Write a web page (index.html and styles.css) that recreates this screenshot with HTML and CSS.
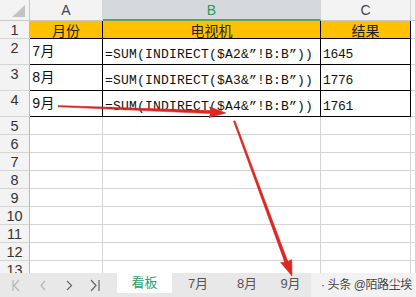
FILE: index.html
```html
<!DOCTYPE html>
<html>
<head>
<meta charset="utf-8">
<title>看板</title>
<link rel="stylesheet" href="styles.css">
</head>
<body>
<div class="page">
    <div class="grid">
        <div class="corner"><span class="tri"></span></div>
        <div class="colh">A</div>
        <div class="colh sel">B</div>
        <div class="colh">C</div>
        <div class="colh"></div>

        <div class="rowh">1</div>
        <div class="c t head">月份</div>
        <div class="c t head">电视机</div>
        <div class="c t head">结果</div>
        <div class="c"></div>

        <div class="rowh">2</div>
        <div class="c t txt">7月</div>
        <div class="c t fx">=SUM(INDIRECT($A2&amp;”!B:B”))</div>
        <div class="c t num">1645</div>
        <div class="c"></div>

        <div class="rowh">3</div>
        <div class="c t txt">8月</div>
        <div class="c t fx">=SUM(INDIRECT($A3&amp;”!B:B”))</div>
        <div class="c t num">1776</div>
        <div class="c"></div>

        <div class="rowh">4</div>
        <div class="c t txt">9月</div>
        <div class="c t fx">=SUM(INDIRECT($A4&amp;”!B:B”))</div>
        <div class="c t num">1761</div>
        <div class="c"></div>

        <div class="rowh">5</div><div class="c"></div><div class="c"></div><div class="c"></div><div class="c"></div>
        <div class="rowh">6</div><div class="c"></div><div class="c"></div><div class="c"></div><div class="c"></div>
        <div class="rowh">7</div><div class="c"></div><div class="c"></div><div class="c"></div><div class="c"></div>
        <div class="rowh">8</div><div class="c"></div><div class="c"></div><div class="c"></div><div class="c"></div>
        <div class="rowh">9</div><div class="c"></div><div class="c"></div><div class="c"></div><div class="c"></div>
        <div class="rowh">10</div><div class="c"></div><div class="c"></div><div class="c"></div><div class="c"></div>
        <div class="rowh">11</div><div class="c"></div><div class="c"></div><div class="c"></div><div class="c"></div>
        <div class="rowh">12</div><div class="c"></div><div class="c"></div><div class="c"></div><div class="c"></div>
        <div class="rowh">13</div><div class="c"></div><div class="c"></div><div class="c"></div><div class="c"></div>
    </div>

    <div class="tabs">
        <svg class="nav" width="117" height="24" viewBox="0 0 117 24">
            <g fill="none" stroke-width="1.2">
                <path d="M13 7V18M19 7L14 12.5L19 18" stroke="#b5b5b5"/>
                <path d="M45 8L41 12.5L45 17" stroke="#b5b5b5"/>
                <path d="M67 8L71.5 12.5L67 17" stroke="#666"/>
                <path d="M91 7L96 12.5L91 18M99 7V18" stroke="#666"/>
            </g>
        </svg>
        <div class="tab on">看板</div>
        <div class="tab w7">7月</div>
        <div class="tab w8">8月</div>
        <div class="tab w9">9月</div>
        <div class="mark">· 头条 @陌路尘埃</div>
    </div>

    <svg class="arrows" width="416" height="297" viewBox="0 0 416 297">
        <g fill="#e0271f" stroke="#c8221b" stroke-width="0.5">
            <polygon points="58,105.6 211,110.6 211,113.6 58,106.8"/>
            <polygon points="226,113 209.5,106.8 211,112 209,117.6"/>
            <polygon points="233.5,121.2 235,120.7 288,262 285,263"/>
            <polygon points="292,276 280.6,262.6 286.5,262.2 291.8,259.6"/>
        </g>
    </svg>
</div>
</body>
</html>
```

FILE: styles.css
```css
body {
    margin: 0;
    background: #fff;
    font-family: "Liberation Sans", "Noto Sans CJK SC", sans-serif;
}
.page {
    position: relative;
    width: 416px;
    height: 297px;
    overflow: hidden;
}
.grid {
    display: grid;
    grid-template-columns: 30px 73px 218px 90px 5px;
    grid-template-rows: 21px 18px 26px 26px 26px repeat(9, 18px);
    height: 273px;
    overflow: hidden;
}
.grid > div {
    box-sizing: border-box;
}
.corner {
    position: relative;
    background: #f3f3f3;
    border-right: 1px solid #c9c9c9;
    border-bottom: 1px solid #c9c9c9;
}
.tri {
    position: absolute;
    right: 4px;
    bottom: 3px;
    width: 0;
    height: 0;
    border-left: 13px solid transparent;
    border-bottom: 12px solid #c3c3c3;
}
.colh {
    background: #f3f3f3;
    border-right: 1px solid #d4d4d4;
    border-bottom: 1px solid #c9c9c9;
    color: #444;
    font-size: 14px;
    text-align: center;
    line-height: 21px;
}
.colh.sel {
    background: #d6d9dc;
    color: #2c9a5e;
    border-bottom: 2px solid #5aa552;
}
.rowh {
    background: #f3f3f3;
    border-right: 1px solid #b8b8b8;
    border-bottom: 1px solid #d4d4d4;
    color: #333;
    font-size: 14.5px;
    text-align: center;
    line-height: 18px;
}
.c {
    border-right: 1px solid #d4d4d4;
    border-bottom: 1px solid #d4d4d4;
    display: flex;
    align-items: flex-end;
    padding: 0 0 2px 2px;
    white-space: nowrap;
    color: #111;
}
.c.t {
    border-right-color: #000;
    border-bottom-color: #000;
}
.head {
    background: #ffc000;
    justify-content: center;
    align-items: center;
    padding: 0;
    font-family: "Noto Sans CJK SC", sans-serif;
    font-size: 14px;
    color: #222;
}
.txt {
    font-family: "Liberation Mono", "Noto Sans CJK SC", monospace;
    font-size: 14px;
    padding-bottom: 4px;
}
.fx {
    font-family: "Liberation Mono", monospace;
    font-size: 13px;
    letter-spacing: 0.2px;
}
.num {
    font-family: "Liberation Mono", monospace;
    font-size: 13px;
    letter-spacing: -0.3px;
}
.tabs {
    display: flex;
    height: 24px;
    background: #e8e8e8;
    font-family: "Liberation Sans", "Noto Sans CJK SC", sans-serif;
    font-size: 13px;
    color: #555;
}
.nav {
    flex: none;
}
.tab {
    flex: none;
    text-align: center;
    line-height: 22px;
}
.tab.on {
    width: 55px;
    height: 20px;
    line-height: 20px;
    background: #fff;
    color: #26a065;
}
.w7 {
    width: 52px;
}
.w8 {
    width: 46px;
}
.w9 {
    width: 41px;
}
.mark {
    flex: 1;
    min-width: 0;
    background: #f2f2f2;
    line-height: 24px;
    padding-left: 10px;
    white-space: nowrap;
    font-size: 12px;
    letter-spacing: -0.4px;
    color: #444;
    text-shadow: 0 0 2px #fff;
}
.arrows {
    position: absolute;
    left: 0;
    top: 0;
}
```
